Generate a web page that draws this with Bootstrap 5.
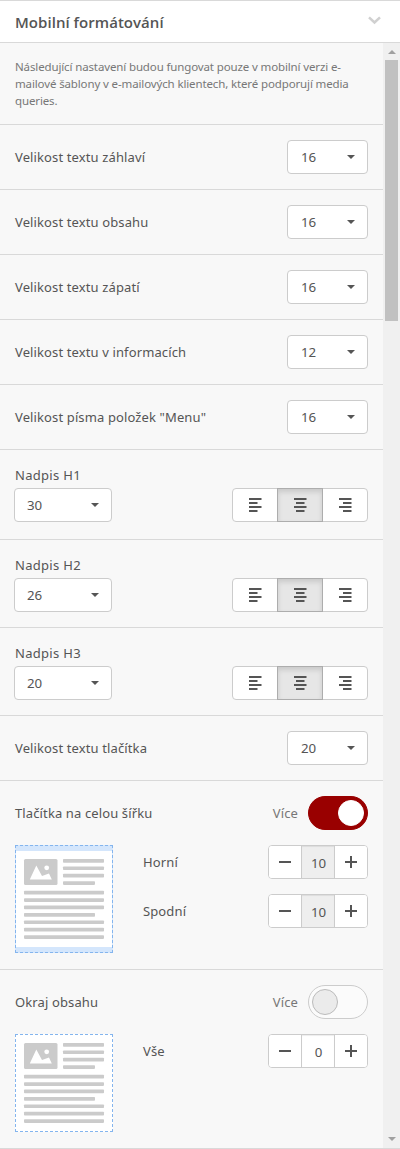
<!DOCTYPE html>
<html lang="cs">
<head>
<meta charset="utf-8">
<meta name="viewport" content="width=device-width, initial-scale=1">
<title>Mobilní formátování</title>
<link rel="stylesheet" href="https://cdn.jsdelivr.net/npm/bootstrap@5.3.0/dist/css/bootstrap.min.css">
<style>
body{font-family:"Noto Sans",sans-serif;font-size:13px;line-height:20px;letter-spacing:.12px;color:#555;background:#f8f8f8}
.panel{height:1149px;border-top:1px solid #d9d9d9;border-bottom:1px solid #d9d9d9}
.panel-head{height:42px;background:#fff;border-bottom:1px solid #d9d9d9;padding:0 19px 0 15px}
.panel-head h1{font:600 15px/20px "Open Sans",sans-serif;letter-spacing:.04px;margin:1px 0 0}
.panel-head svg{margin-top:-2px}
.opt{border-bottom:1px solid #d9d9d9;padding:15px}
.opt:last-child{border-bottom:0}
.intro{font-size:11.5px;line-height:17px;letter-spacing:-.13px;color:#777;height:82px}
.line{height:65px}
.heading-opt{height:88px;padding-left:14px}
.heading-opt.first{height:90px}
.heading-opt label{display:block;line-height:20px;letter-spacing:.3px;margin:0 0 3px 1px}
.pick{width:81px;height:34px;background:#fff;border:1px solid #ccc;border-radius:4px;color:#555;font-size:13.3px;line-height:20px;letter-spacing:0;padding:0 12px 0 13px}
.pick.wide{width:98px;padding-left:12px}
.pick::after{content:"";border:4px solid transparent;border-top-color:#555;border-bottom:0}
.aligns .btn{width:46px;height:34px;padding:0;border:1px solid #ccc;border-radius:4px;background:#fff;display:flex;align-items:center;justify-content:center}
.aligns .btn.active{background:#e6e6e6;border-color:#adadad;box-shadow:inset 0 3px 5px rgba(0,0,0,.125)}
.aligns{width:136px}
.stepper{width:100px;height:34px;border:1px solid #ccc;border-radius:4px;background:#fff;overflow:hidden}
.stepper button{border:0;background:#fff;width:32px;padding:0}
.stepper button svg{display:block;margin:0 auto}
.stepper .val{width:34px;border:solid #ccc;border-width:0 1px;padding:2px 0 0 1px;box-shadow:inset 0 1px 1px rgba(0,0,0,.075);font-size:13.3px;letter-spacing:0}
.stepper .val.muted{background:#eee}
.switch{width:60px;height:34px;border-radius:17px;border:1px solid #ccc;background:#fbfbfb;padding:3px}
.switch i{width:26px;height:26px;border-radius:50%;background:#ebebeb;border:1px solid #bbb}
.switch.on{background:#900;border-color:#900;justify-content:flex-end}
.switch.on i{background:#fff;border-color:#fff}
.more{color:#777;margin-right:10px}
.preview{width:98px;border:1px dashed #84b5ee;background:#fff}
.preview.bands{background:#d4e6fc;padding:5px 0}
.preview svg{display:block;background:#fff}
.body-row{margin-top:15px}
.full-width{height:189px}
.steps{gap:15px;padding-left:30px}
.track{width:17px;background:#f0f0f0;padding:7px 2px 7px}
.thumb{height:261px;background:#c1c1c1;margin-top:6px}
</style>
<script src="https://cdn.jsdelivr.net/npm/bootstrap@5.3.0/dist/js/bootstrap.bundle.min.js"></script>
</head>
<body>
<svg width="0" height="0" class="d-none" aria-hidden="true">
<symbol id="al" viewBox="0 0 13 14"><path d="M0 1h12.5M0 5h8.5M0 9h12.5M0 13h8.5" stroke="#555" stroke-width="2"/></symbol>
<symbol id="ac" viewBox="0 0 13 14"><path d="M0 1h12.5M2 5h8.5M0 9h12.5M2 13h8.5" stroke="#555" stroke-width="2"/></symbol>
<symbol id="ar" viewBox="0 0 13 14"><path d="M0 1h12.5M4 5h8.5M0 9h12.5M4 13h8.5" stroke="#555" stroke-width="2"/></symbol>
<symbol id="minus" viewBox="0 0 12 12"><path d="M0 6h12" stroke="#555" stroke-width="2"/></symbol>
<symbol id="plus" viewBox="0 0 12 12"><path d="M0 6h12M6 0v12" stroke="#555" stroke-width="2"/></symbol>
<symbol id="doc" viewBox="0 0 96 96"><rect x="8" y="8" width="33.5" height="26" rx="1.5" fill="#cbcbcb"/><path d="M13.8 28.5 20.3 14.6 26 25l7-2.4 2.8 5.9z" fill="#fff"/><circle cx="30.7" cy="16.8" r="2.4" fill="#fff"/>
<g fill="#cbcbcb"><rect x="47" y="8" width="41" height="3.7" rx=".8"/><rect x="47" y="15.4" width="41" height="3.7" rx=".8"/><rect x="47" y="22.8" width="41" height="3.7" rx=".8"/><rect x="47" y="30.2" width="32" height="3.7" rx=".8"/><rect x="8" y="39.8" width="80" height="3.7" rx=".8"/><rect x="8" y="47.2" width="80" height="3.7" rx=".8"/><rect x="8" y="54.6" width="80" height="3.7" rx=".8"/><rect x="8" y="62" width="71" height="3.7" rx=".8"/><rect x="8" y="69.4" width="80" height="3.7" rx=".8"/><rect x="8" y="76.8" width="80" height="3.7" rx=".8"/><rect x="8" y="84.2" width="80" height="3.7" rx=".8"/></g></symbol>
</svg>
<div class="panel d-flex flex-column">
<header class="panel-head d-flex align-items-center justify-content-between">
<h1>Mobilní formátování</h1>
<svg width="13" height="9" viewBox="0 0 13 9"><path d="M1 1.3 6.5 6.5 12 1.3" fill="none" stroke="#d0d0d0" stroke-width="2.5"/></svg>
</header>
<div class="d-flex flex-grow-1">
<main class="flex-grow-1">
<p class="opt intro mb-0">Následující nastavení budou fungovat pouze v mobilní verzi e-<br>mailové šablony v e-mailových klientech, které podporují media<br>queries.</p>
<div class="opt line d-flex align-items-center justify-content-between"><span>Velikost textu záhlaví</span><button class="pick d-flex align-items-center justify-content-between">16</button></div>
<div class="opt line d-flex align-items-center justify-content-between"><span>Velikost textu obsahu</span><button class="pick d-flex align-items-center justify-content-between">16</button></div>
<div class="opt line d-flex align-items-center justify-content-between"><span>Velikost textu zápatí</span><button class="pick d-flex align-items-center justify-content-between">16</button></div>
<div class="opt line d-flex align-items-center justify-content-between"><span>Velikost textu v informacích</span><button class="pick d-flex align-items-center justify-content-between">12</button></div>
<div class="opt line d-flex align-items-center justify-content-between"><span>Velikost písma položek "Menu"</span><button class="pick d-flex align-items-center justify-content-between">16</button></div>
<div class="opt heading-opt first"><label>Nadpis H1</label><div class="d-flex justify-content-between"><button class="pick wide d-flex align-items-center justify-content-between">30</button><div class="btn-group aligns"><button class="btn"><svg width="13" height="14"><use href="#al"/></svg></button><button class="btn active"><svg width="13" height="14"><use href="#ac"/></svg></button><button class="btn"><svg width="13" height="14"><use href="#ar"/></svg></button></div></div></div>
<div class="opt heading-opt"><label>Nadpis H2</label><div class="d-flex justify-content-between"><button class="pick wide d-flex align-items-center justify-content-between">26</button><div class="btn-group aligns"><button class="btn"><svg width="13" height="14"><use href="#al"/></svg></button><button class="btn active"><svg width="13" height="14"><use href="#ac"/></svg></button><button class="btn"><svg width="13" height="14"><use href="#ar"/></svg></button></div></div></div>
<div class="opt heading-opt"><label>Nadpis H3</label><div class="d-flex justify-content-between"><button class="pick wide d-flex align-items-center justify-content-between">20</button><div class="btn-group aligns"><button class="btn"><svg width="13" height="14"><use href="#al"/></svg></button><button class="btn active"><svg width="13" height="14"><use href="#ac"/></svg></button><button class="btn"><svg width="13" height="14"><use href="#ar"/></svg></button></div></div></div>
<div class="opt line d-flex align-items-center justify-content-between"><span>Velikost textu tlačítka</span><button class="pick d-flex align-items-center justify-content-between">20</button></div>
<section class="opt full-width">
<div class="d-flex align-items-center"><span class="me-auto">Tlačítka na celou šířku</span><span class="more">Více</span><span class="switch on d-flex"><i></i></span></div>
<div class="d-flex align-items-start body-row"><div class="preview bands"><svg width="96" height="96"><use href="#doc"/></svg></div>
<div class="flex-grow-1 d-flex flex-column steps"><div class="d-flex align-items-center justify-content-between"><span>Horní</span><div class="stepper d-flex"><button><svg width="12" height="12"><use href="#minus"/></svg></button><span class="val muted d-flex align-items-center justify-content-center">10</span><button><svg width="12" height="12"><use href="#plus"/></svg></button></div></div>
<div class="d-flex align-items-center justify-content-between"><span>Spodní</span><div class="stepper d-flex"><button><svg width="12" height="12"><use href="#minus"/></svg></button><span class="val muted d-flex align-items-center justify-content-center">10</span><button><svg width="12" height="12"><use href="#plus"/></svg></button></div></div></div></div>
</section>
<section class="opt">
<div class="d-flex align-items-center"><span class="me-auto">Okraj obsahu</span><span class="more">Více</span><span class="switch d-flex"><i></i></span></div>
<div class="d-flex align-items-start body-row"><div class="preview"><svg width="96" height="96"><use href="#doc"/></svg></div>
<div class="flex-grow-1 d-flex flex-column steps"><div class="d-flex align-items-center justify-content-between"><span>Vše</span><div class="stepper d-flex"><button><svg width="12" height="12"><use href="#minus"/></svg></button><span class="val d-flex align-items-center justify-content-center">0</span><button><svg width="12" height="12"><use href="#plus"/></svg></button></div></div></div></div>
</section>
</main>
<div class="track d-flex flex-column align-items-center"><svg width="8" height="4"><path d="M0 4 4 0l4 4z" fill="#a0a0a0"/></svg><div class="thumb w-100"></div><svg class="mt-auto" width="8" height="4"><path d="M0 0h8L4 4z" fill="#a0a0a0"/></svg></div>
</div>
</div>
</body>
</html>
